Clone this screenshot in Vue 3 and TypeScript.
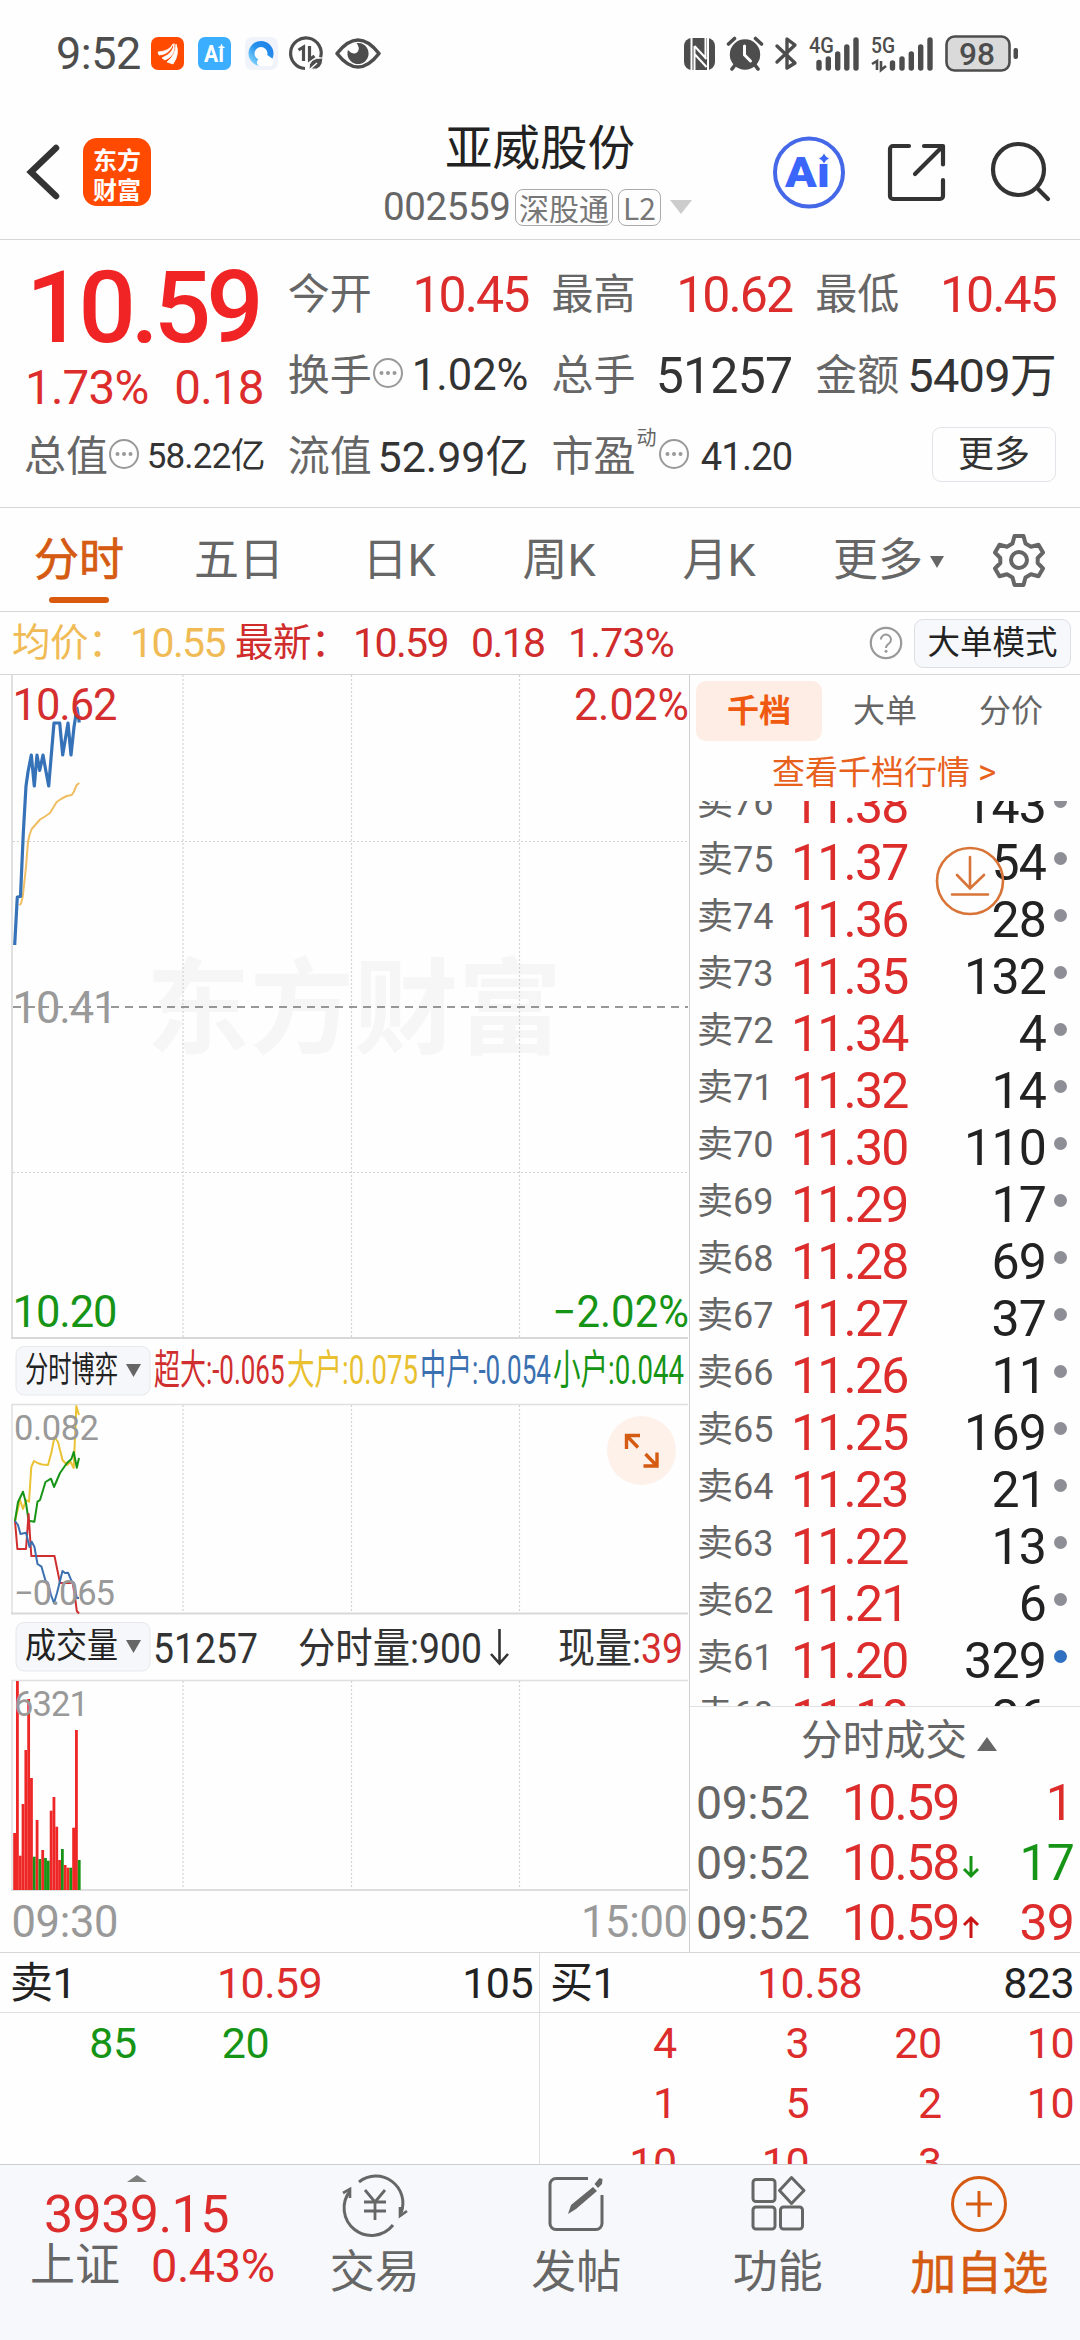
<script setup lang="ts">
interface Quote { label: string; value: string; tone?: string; size?: number; info?: boolean; sup?: string }
interface Level { n: number; price: string; qty: string; blue?: boolean }

const quotes: Quote[] = [
  { label: '今开', value: '10.45', tone: 'red price', size: 50 },
  { label: '最高', value: '10.62', tone: 'red price', size: 50 },
  { label: '最低', value: '10.45', tone: 'red price', size: 50 },
  { label: '换手', value: '1.02%', tone: 'loose', size: 43.5, info: true },
  { label: '总手', value: '51257', size: 50 },
  { label: '金额', value: '5409万', size: 47 },
  { label: '总值', value: '58.22亿', size: 35, info: true },
  { label: '流值', value: '52.99亿', tone: 'loose', size: 43 },
  { label: '市盈', value: '41.20', size: 38, info: true, sup: '动' },
]

const tabs: string[] = ['分时', '五日', '日K', '周K', '月K']

const levels: Level[] = [
  { n: 76, price: '11.38', qty: '143' },
  { n: 75, price: '11.37', qty: '54' },
  { n: 74, price: '11.36', qty: '28' },
  { n: 73, price: '11.35', qty: '132' },
  { n: 72, price: '11.34', qty: '4' },
  { n: 71, price: '11.32', qty: '14' },
  { n: 70, price: '11.30', qty: '110' },
  { n: 69, price: '11.29', qty: '17' },
  { n: 68, price: '11.28', qty: '69' },
  { n: 67, price: '11.27', qty: '37' },
  { n: 66, price: '11.26', qty: '11' },
  { n: 65, price: '11.25', qty: '169' },
  { n: 64, price: '11.23', qty: '21' },
  { n: 63, price: '11.22', qty: '13' },
  { n: 62, price: '11.21', qty: '6' },
  { n: 61, price: '11.20', qty: '329', blue: true },
  { n: 60, price: '11.18', qty: '26' },
]

const trades = [
  { time: '09:52', price: '10.59', dir: '', qty: '1', tone: 'red' },
  { time: '09:52', price: '10.58', dir: 'down', qty: '17', tone: 'green' },
  { time: '09:52', price: '10.59', dir: 'up', qty: '39', tone: 'red' },
]

const sellQueue: string[] = ['85', '20']
const buyQueue: string[] = ['4', '3', '20', '10', '1', '5', '2', '10', '10', '10', '3']

const gridX: number[] = [183, 351.5, 519.5]

/* top edge of each one-minute volume bar, and whether it is a rising one */
const bars: [number, boolean][] = [
  [1833, true], [1681, true], [1855.7, true], [1804, true], [1750, true], [1699, true], [1778, true],
  [1856.7, false], [1820, true], [1859, false], [1850, true], [1858, false], [1860.7, false],
  [1810.7, true], [1797, true], [1826.7, true], [1860, true], [1849, false], [1865, true],
  [1867.7, true], [1867.7, false], [1827.7, true], [1730, true], [1860, false],
]

const pricePath = '14.7,945 17.3,897 20.5,896.5 23.3,833 26,786 28,772 31.3,755 34.3,786 37,755 39.7,770.5 43,755 45.7,770 48.7,786 51.3,755 54,723 59.7,723 62.7,755 68,723 71,755 74,727 77,708 79.3,722.5'
const avgPath = '19.3,905 20.8,904 22.7,897 26,867 28,842 29.5,835 31.7,829 40,819.5 45,816.5 50,813 53,808 56.7,802 61,799 66.7,796 71.7,795 73.7,792 76.7,785 79.3,783'
const bigPath = '15,1521 20,1500 23,1509 26,1500 29,1501.7 31.3,1467 34,1461 37.5,1463 42,1464.5 48,1465 51.3,1453 54.5,1437 58,1442 62.5,1460 67,1465 70.5,1461.7 73.7,1468 76.3,1406 79,1415'
const smallPath = '15,1521 18,1502 23,1491.7 26,1503 28.6,1520.7 34.4,1521.7 37.5,1501.7 40,1500 45.5,1482 51,1478.7 54,1487 60,1473 67,1463 71.4,1459 73.7,1452 76.8,1467.7 79,1458'
const superPath = '15,1521 17.4,1549 26,1549 28.6,1514 31.3,1556 54.5,1556 60,1583 72.8,1583 75,1597 76.8,1611 79,1613.5'
const midPath = '15,1521 18,1525 20.5,1534 26,1532.7 29.5,1547 31.7,1541.7 34.4,1546.7 37.5,1564 41.5,1566.7 45.5,1580.7 48,1583 51,1595 54,1603 57,1593 62.5,1571 65,1573 68,1572.7 71.4,1580.7 74,1583 76.8,1598 79,1598'
</script>

<template>
  <div class="page">
    <header class="status">
      <span class="clock">9:52</span>
      <svg class="status-left" viewBox="150 30 240 46" width="240" height="46">
        <defs>
          <linearGradient id="ring" x1="0" y1="1" x2="1" y2="0">
            <stop offset="0" stop-color="#7fd4fb" /><stop offset="0.5" stop-color="#2a94ec" /><stop offset="1" stop-color="#1e80e8" />
          </linearGradient>
        </defs>
        <rect x="151" y="37" width="33" height="33" rx="7" fill="#ff4a00" />
        <path d="M158 52q12-1 15-8q-4 11-14 11zM162 58q12-5 12-14.500q2 12-9 16.500zM167 62q9-7 9-18q4 10-3 20z" fill="#fff" stroke="#fff" stroke-width=".8" stroke-linejoin="round" />
        <rect x="198" y="37" width="33" height="33" rx="7" fill="#3baeff" />
        <text x="204" y="61.500" class="tiny-ai" textLength="20" lengthAdjust="spacingAndGlyphs">Aı</text>
        <path d="M221.500 43.500l1.100 2.700 2.700 1.100-2.700 1.100-1.100 2.700-1.100-2.700-2.700-1.100 2.700-1.100z" fill="#fff" />
        <rect x="245" y="37" width="33" height="33" rx="7" fill="#f0f4fa" />
        <circle cx="261" cy="53.500" r="9.500" fill="#fff" stroke="url(#ring)" stroke-width="6" />
        <path d="M259 66a4 4 0 0 1 1-7.500a6 6 0 0 1 10-1.500a5 5 0 0 1 1 9z" fill="#fff" />
        <g fill="none" stroke="#4d4d4d" stroke-width="3.200">
          <path d="M305 68.500a15.300 15.300 0 1 1 15.600-11" />
          <path d="M298.500 50l5-3v14M309.500 46v13.500l5-3.500" stroke-width="3.200" />
        </g>
        <path d="M309 70q-1-13 14-12q-1 13-11 11z" fill="#4d4d4d" stroke="#fff" stroke-width="1" />
        <path d="M308 71l9-8" stroke="#fff" stroke-width="1.500" />
        <path d="M337 53.500Q358 26.500 379 53.500Q358 80.500 337 53.500z" fill="none" stroke="#4d4d4d" stroke-width="3.600" stroke-linejoin="round" />
        <path d="M348 50a10.600 10.600 0 1 0 8.500-7q4 5 1 9q-4 4-9.500-2z" fill="#4d4d4d" />
      </svg>
      <svg class="status-right" viewBox="680 30 345 46" width="345" height="46">
        <rect x="684" y="38" width="31" height="32" rx="8" fill="#4d4d4d" />
        <path d="M691.500 36v34M708 38v34" stroke="#fff" stroke-width="2" />
        <path d="M694.500 46v24M694.500 46l12 13M694.500 54l12 13M705.500 38v21" stroke="#fff" stroke-width="2" fill="none" />
        <circle cx="745" cy="54.500" r="15.200" fill="#4d4d4d" />
        <path d="M728.500 44l6-5.500M761.500 44l-6-5.500M735 65l-3 4M755 65l3 4" stroke="#4d4d4d" stroke-width="3.600" stroke-linecap="round" />
        <path d="M744.500 46v9l6 6" fill="none" stroke="#fff" stroke-width="3" stroke-linecap="round" />
        <path d="M777 46l18 17-8 5V39l8 6-18 17" fill="none" stroke="#4d4d4d" stroke-width="3.400" stroke-linejoin="round" stroke-linecap="round" />
        <text x="809" y="53" class="net" textLength="25" lengthAdjust="spacingAndGlyphs">4G</text>
        <text x="871" y="53" class="net" textLength="24" lengthAdjust="spacingAndGlyphs">5G</text>
        <path d="M819 62.500V68M828.300 59v9M837.700 54v14M846.800 47v21M856 40v28M892.500 63v5M902 59v9M911.300 54v14M920.700 47v21M930 40v28" stroke="#4d4d4d" stroke-width="5.400" stroke-linecap="round" />
        <path d="M872 64l5-3v9M881 61v9l5-4" fill="none" stroke="#4d4d4d" stroke-width="2.600" />
        <rect x="946.500" y="36.500" width="63" height="34" rx="8" fill="#dadada" stroke="#4d4d4d" stroke-width="2.600" />
        <rect x="1013.500" y="48" width="4.500" height="11" rx="2" fill="#4d4d4d" />
        <text x="959" y="65" class="bat" textLength="36" lengthAdjust="spacingAndGlyphs">98</text>
      </svg>
    </header>

    <nav class="head">
      <svg class="back" viewBox="0 0 36 60" width="36" height="60"><path d="M31 6L6 30l25 24" fill="none" stroke="#333" stroke-width="6.500" stroke-linecap="round" stroke-linejoin="miter" /></svg>
      <div class="logo"><span>东方</span><span>财富</span></div>
      <div class="title">
        <div class="name">亚威股份</div>
        <div class="code"><span class="num">002559</span><i>深股通</i><i>L2</i><b class="tri"></b></div>
      </div>
      <svg class="tools" viewBox="770 130 284 84" width="284" height="84">
        <circle cx="809" cy="172.500" r="34" fill="#fff" stroke="#4468e8" stroke-width="4" />
        <text x="785" y="187" class="ai" textLength="45" lengthAdjust="spacingAndGlyphs">Aı</text>
        <path d="M824 153q1.500 4 5.500 5.500q-4 1.500-5.500 5.500q-1.500-4-5.500-5.500q4-1.500 5.500-5.500z" fill="#3a66fb" stroke="#fff" stroke-width=".5" />
        <path d="M909 146h-16a3 3 0 0 0-3 3v47a3 3 0 0 0 3 3h47a3 3 0 0 0 3-3v-16M924 146h19v18.500M942 147l-27 27" fill="none" stroke="#333" stroke-width="4.200" stroke-linecap="round" stroke-linejoin="round" />
        <circle cx="1018.500" cy="169.500" r="25.500" fill="none" stroke="#333" stroke-width="4.200" />
        <path d="M1037 188l11 11" stroke="#333" stroke-width="4.200" stroke-linecap="round" />
      </svg>
    </nav>

    <section class="quote">
      <div class="last">
        <div class="big">10.59</div>
        <div class="chg"><span>1.73%</span><span>0.18</span></div>
      </div>
      <div v-for="q in quotes" :key="q.label" class="cell">
        <span class="lab">{{ q.label }}<sup v-if="q.sup">{{ q.sup }}</sup></span>
        <svg v-if="q.info" :class="['info', { wide: q.sup }]" viewBox="0 0 32 32" width="32" height="32">
          <circle cx="16" cy="16" r="14" fill="none" stroke="#999" stroke-width="2" />
          <g fill="#999"><circle cx="9.500" cy="16" r="2" /><circle cx="16" cy="16" r="2" /><circle cx="22.500" cy="16" r="2" /></g>
        </svg>
        <span :class="['val', q.tone]" :style="{ fontSize: q.size + 'px' }">{{ q.value }}</span>
      </div>
      <div class="cell more"><button>更多</button></div>
    </section>

    <nav class="tabs">
      <span v-for="(t, i) in tabs" :key="t" :class="['tab', { on: i === 0 }]">{{ t }}</span>
      <span class="tab-more">更多<b class="tri"></b></span>
      <svg class="gear" viewBox="-30 -30 60 60" width="60" height="60">
        <path d="M-4.500-24h9l2 7.500l5.500 3.200l7.500-2l4.500 7.800l-5.300 5.500v5l5.300 5.500l-4.500 7.800l-7.500-2l-5.500 3.200l-2 7.500h-9l-2-7.500l-5.500-3.200l-7.500 2l-4.500-7.800l5.300-5.500v-5l-5.300-5.500l4.500-7.800l7.500 2l5.500-3.200z" fill="none" stroke="#666" stroke-width="4" stroke-linejoin="round" />
        <circle r="8" fill="none" stroke="#666" stroke-width="4" />
      </svg>
    </nav>

    <section class="line">
      <span class="avg-l">均价：</span><span class="avg-v">10.55</span>
      <span class="new-l">最新：</span><span class="new-v">10.59</span><span class="new-d">0.18</span><span class="new-p">1.73%</span>
      <svg class="help" viewBox="0 0 34 34" width="34" height="34">
        <circle cx="17" cy="17" r="15.200" fill="none" stroke="#999" stroke-width="2.200" />
        <path d="M12 13.500a5 5 0 1 1 8 4q-3 2-3 4.500" fill="none" stroke="#999" stroke-width="2" /><circle cx="17" cy="25.300" r="1.500" fill="#999" />
      </svg>
      <button class="mode">大单模式</button>
    </section>

    <main class="body">
      <div class="charts">
        <svg viewBox="0 675 689 665" width="689" height="665">
          <text x="146" y="1046" class="mark" textLength="416" lengthAdjust="spacingAndGlyphs">东方财富</text>
          <g class="dot"><path v-for="x in gridX" :key="x" :d="`M${x} 675V1338`" /><path d="M13 841.500H688M13 1172.500H688" /></g>
          <path d="M12 675V1338" stroke="#e0e0e0" stroke-width="2" />
          <path d="M11 1338H688" stroke="#d8d8d8" stroke-width="2" />
          <path d="M13 1007H688" stroke="#777" stroke-width="1.500" stroke-dasharray="8 6" />
          <polyline :points="avgPath" class="ln" stroke="#efbe62" />
          <polyline :points="pricePath" class="ln thick" stroke="#3572b8" />
          <g class="ax">
            <text x="12.500" y="720" textLength="105" class="f-red">10.62</text>
            <text x="574" y="720" textLength="115" lengthAdjust="spacingAndGlyphs" class="f-red">2.02%</text>
            <text x="12.500" y="1023" textLength="105" class="f-gray">10.41</text>
            <text x="12.500" y="1327" textLength="105" class="f-green">10.20</text>
            <text x="552.500" y="1327" textLength="136.500" lengthAdjust="spacingAndGlyphs" class="f-green">−2.02%</text>
          </g>
        </svg>

        <svg viewBox="0 1340 689 64" width="689" height="64">
          <rect x="16" y="1346.500" width="134" height="48.500" rx="8" class="sel" />
          <text x="25" y="1382" class="sel-t" textLength="93" lengthAdjust="spacingAndGlyphs">分时博弈</text>
          <path d="M126 1364h15l-7.500 13z" fill="#666" />
          <g class="ind">
            <text x="154" y="1384" fill="#d02f2f" textLength="130.500" lengthAdjust="spacingAndGlyphs">超大:-0.065</text>
            <text x="287" y="1384" fill="#e8c030" textLength="131" lengthAdjust="spacingAndGlyphs">大户:0.075</text>
            <text x="420" y="1384" fill="#3b70b0" textLength="131" lengthAdjust="spacingAndGlyphs">中户:-0.054</text>
            <text x="553" y="1384" fill="#169416" textLength="131" lengthAdjust="spacingAndGlyphs">小户:0.044</text>
          </g>
        </svg>

        <svg viewBox="0 1404 689 211" width="689" height="211">
          <g class="dot"><path v-for="x in gridX" :key="x" :d="`M${x} 1405V1613`" /></g>
          <path d="M12 1613V1404.500H688" fill="none" stroke="#e0e0e0" stroke-width="1.500" />
          <path d="M11 1613.500H688" stroke="#d8d8d8" stroke-width="2" />
          <polyline :points="bigPath" class="ln" stroke="#e9c235" />
          <polyline :points="smallPath" class="ln" stroke="#169416" />
          <polyline :points="superPath" class="ln" stroke="#d02f2f" />
          <polyline :points="midPath" class="ln" stroke="#3b70b0" />
          <text x="14" y="1440" class="sm" textLength="85">0.082</text>
          <text x="14" y="1605" class="sm" textLength="101">−0.065</text>
          <circle cx="641.500" cy="1450.500" r="34.500" fill="#fdf1ea" />
          <path d="M640 1435.500h-13.500v13.500M627 1436l11 11.500M643.500 1466h13.500v-13.500M656.500 1465.500l-11-11.500" fill="none" stroke="#d55a12" stroke-width="3.400" />
        </svg>

        <svg viewBox="0 1615 689 65" width="689" height="65">
          <rect x="16" y="1622.500" width="134" height="48.500" rx="8" class="sel" />
          <text x="25" y="1658" class="sel-t" textLength="93" lengthAdjust="spacingAndGlyphs">成交量</text>
          <path d="M126 1640h15l-7.500 13z" fill="#666" />
          <g class="vol">
            <text x="153" y="1663" textLength="105" lengthAdjust="spacingAndGlyphs">51257</text>
            <text x="298" y="1663" textLength="184" lengthAdjust="spacingAndGlyphs">分时量:900</text>
            <path d="M499.500 1629v34M491 1654l8.500 9.500 8.500-9.500" fill="none" stroke="#333" stroke-width="2.600" />
            <text x="558" y="1663" textLength="83" lengthAdjust="spacingAndGlyphs">现量:</text>
            <text x="641" y="1663" textLength="42" lengthAdjust="spacingAndGlyphs" class="f-red">39</text>
          </g>
        </svg>

        <svg viewBox="0 1680 689 272" width="689" height="272">
          <g class="dot"><path v-for="x in gridX" :key="x" :d="`M${x} 1681V1889`" /></g>
          <path d="M12 1890V1680.500H688" fill="none" stroke="#e0e0e0" stroke-width="1.500" />
          <path d="M11 1890H688" stroke="#dedede" stroke-width="2" />
          <rect v-for="(b, i) in bars" :key="i" :x="13.2 + i * 2.81" :y="b[0]" width="2.8" :height="1890 - b[0]" :fill="b[1] ? '#ee2626' : '#169416'" />
          <text x="14" y="1716" class="sm" textLength="75">6321</text>
          <g class="ax">
            <text x="11.500" y="1937" textLength="107" class="f-gray">09:30</text>
            <text x="581" y="1937" textLength="107" class="f-gray">15:00</text>
          </g>
        </svg>
      </div>

      <aside class="side">
        <div class="side-tabs"><span class="on">千档</span><span>大单</span><span>分价</span></div>
        <div class="link">查看千档行情<em>&gt;</em></div>
        <div class="levels">
          <div class="levels-in">
            <div v-for="l in levels" :key="l.n" class="lv">
              <span class="lv-n">卖{{ l.n }}</span><span class="lv-p">{{ l.price }}</span><span class="lv-q">{{ l.qty }}</span><i :class="{ blue: l.blue }"></i>
            </div>
          </div>
          <svg class="jump" viewBox="-36 -36 72 72" width="72" height="72">
            <g fill="none" stroke="#d87437" stroke-width="2.600"><circle r="33" /><path d="M0-24V7M-13-6L0 7.500 14-6M-18 13.500H18" stroke-linecap="round" /></g>
          </svg>
        </div>
        <div class="deal-h">分时成交<b class="tri up"></b></div>
        <div v-for="(t, i) in trades" :key="i" class="deal">
          <span class="d-t">{{ t.time }}</span><span class="d-p">{{ t.price }}</span>
          <svg class="d-a" viewBox="0 0 18 26" width="18" height="26">
            <path v-if="t.dir === 'down'" d="M9 2v20M2 15l7 7 7-7" fill="none" stroke="#169416" stroke-width="3" />
            <path v-if="t.dir === 'up'" d="M9 24V4M2 11l7-7 7 7" fill="none" stroke="#c81414" stroke-width="3" />
          </svg>
          <span :class="['d-q', t.tone, { one: t.qty.length === 1 }]">{{ t.qty }}</span>
        </div>
      </aside>
    </main>

    <section class="queue">
      <div class="q-side">
        <div class="q-head"><span>卖1</span><span class="q-price red">10.59</span><span class="q-vol">105</span></div>
        <div class="q-grid green"><span v-for="(v, i) in sellQueue" :key="i">{{ v }}</span></div>
      </div>
      <div class="q-side buy">
        <div class="q-head"><span>买1</span><span class="q-price red">10.58</span><span class="q-vol">823</span></div>
        <div class="q-grid red"><span v-for="(v, i) in buyQueue" :key="i">{{ v }}</span></div>
      </div>
    </section>

    <footer class="foot">
      <div class="index">
        <b class="tri up"></b>
        <div class="idx-v">3939.15</div>
        <div class="idx-r"><span>上证</span><span class="red idx-p">0.43%</span></div>
      </div>
      <div class="act">
        <svg viewBox="-34 -30 68 60" width="68" height="60">
          <g fill="none" stroke="#666" stroke-width="3">
            <path d="M-16-22A27 27 0 0 1 26 9M18 21A27 27 0 0 1-25-13" /><path d="M-32-11l7-4v9M25 3v9l7-5" stroke-width="2.600" />
            <path d="M-10-14L0-2 10-14M0-2v18M-11-2h22M-11 7h22" stroke-width="2.800" />
          </g>
        </svg>
        <span>交易</span>
      </div>
      <div class="act">
        <svg viewBox="-34 -30 68 60" width="68" height="60">
          <path d="M12-25.500h-32a6 6 0 0 0-6 6v39a6 6 0 0 0 6 6H20a6 6 0 0 0 6-6V-9" fill="none" stroke="#666" stroke-width="3" />
          <path d="M-8 10l3-9 22-18 4 4-21 18zM18.500-20l5-6 3 1-.5 5-4 4z" fill="#666" />
        </svg>
        <span>发帖</span>
      </div>
      <div class="act">
        <svg viewBox="-34 -30 68 60" width="68" height="60">
          <g fill="none" stroke="#666" stroke-width="3"><rect x="-25" y="-24.500" width="22" height="22" rx="3" /><rect x="-25" y="3" width="22" height="22" rx="3" /><rect x="2.500" y="3" width="22" height="22" rx="3" /><path d="M13.500-26.500L26-13.500 13.500-.5 1.500-13.500z" stroke-linejoin="round" /></g>
        </svg>
        <span>功能</span>
      </div>
      <div class="act add">
        <svg viewBox="-34 -30 68 60" width="68" height="60"><circle r="26.500" fill="none" stroke="#d55a12" stroke-width="3" /><path d="M0-13V13M-13 0H13" stroke="#d55a12" stroke-width="3" /></svg>
        <span>加自选</span>
      </div>
    </footer>
  </div>
</template>

<style>
body { margin: 0; background: #fefefe; }
</style>

<style scoped>
.page {
  width: 1080px; height: 2340px; overflow: hidden; background: #fefefe; color: #333;
  font-family: Roboto, "Noto Sans CJK SC", sans-serif;
  display: flex; flex-direction: column; white-space: nowrap;
}
.page svg { display: block; flex: none; overflow: visible; }
.page text { font-family: Roboto, "Noto Sans CJK SC", sans-serif; }
.red { color: #dc2c2c; }
.green { color: #169416; }
.tri { display: inline-block; width: 0; height: 0; border: solid transparent; border-width: 14px 11px 0; border-top-color: #ccc; }
.tri.up { border-width: 0 10.5px 14px; border-top-color: transparent; border-bottom-color: #666; }

.status { height: 107px; display: flex; align-items: flex-start; }
.clock { width: 94px; padding-left: 56px; font-size: 45px; line-height: 46px; padding-top: 31px; color: #4d4d4d; letter-spacing: -0.5px; }
.status-left { margin-top: 30px; }
.status-right { margin: 30px 0 0 290px; }
.tiny-ai { font-size: 24px; font-weight: 700; fill: #fff; }
.net { font-size: 22px; font-weight: 500; fill: #4d4d4d; }
.bat { font-size: 31px; font-weight: 500; fill: #4d4d4d; }

.head { height: 132px; border-bottom: 1px solid #d6d6d6; display: flex; align-items: flex-start; flex: none; }
.back { margin: 35px 0 0 25px; }
.logo { margin: 31px 0 0 22px; width: 68px; height: 60px; padding-top: 8px; border-radius: 14px; background: #ff4a00; color: #fff; font-weight: 700; font-size: 24px; line-height: 30px; display: flex; flex-direction: column; align-items: center; }
.title { width: 386px; margin-left: 196px; }
.name { font-size: 47.5px; line-height: 60px; margin: 12px 0 0 98px; color: #222; }
.code { display: flex; align-items: center; height: 38px; margin: 9px 0 0 36px; color: #666; }
.code .num { font-size: 38.5px; line-height: 38px; width: 132px; letter-spacing: -0.4px; }
.code i { font-style: normal; font-size: 30px; line-height: 34px; height: 35px; border: 1.5px solid #aaa; border-radius: 8px; padding: 0 3px; margin-right: 5px; color: #777; font-family: "Noto Sans CJK SC", sans-serif; }
.code i + i { padding: 0 4px; }
.code .tri { margin-left: 4px; }
.tools { margin: 23px 0 0 37px; }
.ai { font-size: 42px; font-weight: 900; fill: #3a66fb; }

.quote { height: 253px; padding: 14px 24px 0; border-bottom: 1px solid #d6d6d6; display: grid; grid-template-columns: repeat(4, 240.75px); column-gap: 23px; grid-auto-rows: 81px; flex: none; }
.last { grid-row: span 2; color: #f02424; }
.big { font-size: 101px; font-weight: 500; line-height: 100px; letter-spacing: -5px; padding: 4px 0 0 2px; }
.chg { display: flex; justify-content: space-between; font-size: 47.5px; line-height: 50px; color: #dc2c2c; letter-spacing: -0.8px; padding: 5px 1px 0 1px; }
.cell { display: flex; align-items: center; }
.lab { font-size: 42px; line-height: 60px; color: #666; position: relative; }
.lab sup { position: absolute; left: 85px; top: -2px; font-size: 20px; line-height: 26px; }
.info { margin: -6px 0 0 0; }
.info.wide { margin-left: 22px; }
.val { margin-left: auto; line-height: 60px; letter-spacing: -0.8px; }
.val.price { letter-spacing: -1.9px; }
.val.loose { letter-spacing: 0; }
.more { justify-content: flex-end; }
.more button, .mode { font-family: inherit; border: 1.5px solid #e1e4e8; border-radius: 9px; background: #fefefe; color: #333; padding: 0; }
.more button { width: 124px; height: 55px; font-size: 36px; line-height: 50px; margin-top: -4px; }

.tabs { height: 103px; border-bottom: 1px solid #d6d6d6; display: flex; align-items: flex-start; font-size: 45px; line-height: 106px; color: #666; flex: none; }
.tab { width: 160px; text-align: center; position: relative; left: -1px; }
.tab.on { color: #d55a12; -webkit-text-stroke: 0.7px #d55a12; }
.tab.on::after { content: ""; position: absolute; left: 50px; top: 89px; width: 60px; height: 6px; border-radius: 3px; background: #d9590f; }
.tab-more { margin-left: 33px; width: 156px; }
.tab-more .tri { border-width: 12px 7.5px 0; border-top-color: #666; margin: 0 0 8px 7px; }
.gear { margin-top: 21.5px; }

.line { height: 62px; border-bottom: 1px solid #d6d6d6; display: flex; align-items: center; font-size: 41px; color: #d02c2c; letter-spacing: -1.6px; flex: none; }
.line > span { flex: none; line-height: 60px; }
.line .avg-l, .line .new-l { font-size: 38.5px; letter-spacing: -0.5px; }
.line .avg-l { margin-left: 12px; width: 118px; color: #f0bb55; }
.avg-v { width: 105px; color: #f0bb55; }
.new-l { width: 118px; }
.new-v { width: 118px; }
.new-d { width: 97px; }
.line .new-p { width: 301px; letter-spacing: -0.8px; }
.mode { margin-left: 11px; width: 157px; height: 49px; background: #f7f8fb; border-color: #dcdfe3; color: #222; font-size: 32.5px; line-height: 44px; }

.body { height: 1277px; border-bottom: 1px solid #d6d6d6; display: flex; flex: none; }
.charts { width: 689px; border-right: 1px solid #d0d0d0; flex: none; }
.dot path { stroke: #d2d2d2; stroke-width: 1.2; stroke-dasharray: 2 2; }
.ln { fill: none; stroke-width: 2; stroke-linejoin: round; }
.ln.thick { stroke-width: 3.2; }
.ax { font-size: 43.5px; }
.sm { font-size: 34.5px; fill: #999; }
.f-red { fill: #d42e2e; }
.f-green { fill: #169416; }
.f-gray { fill: #999; }
.mark { font-size: 104px; font-weight: 700; fill: #f6f6f6; }
.sel { fill: #f6f7fa; stroke: #e6e8ec; stroke-width: 1; }
.sel-t { font-size: 35px; fill: #222; }
.ind { font-size: 41px; }
.vol { font-size: 42px; fill: #333; }

.side { width: 390px; display: flex; flex-direction: column; }
.side > div { flex: none; }
.side-tabs { display: flex; padding: 6px 0 0 6px; height: 60px; font-size: 32px; line-height: 61px; text-align: center; color: #666; }
.side-tabs span { width: 126px; }
.side-tabs .on { background: #fdede5; border-radius: 10px; color: #f05a10; font-weight: 700; }
.link { height: 60px; padding-left: 82px; font-size: 33px; line-height: 63px; color: #e8611c; }
.link em { font-style: normal; font-size: 35px; margin-left: 8px; }
.levels { height: 905px; overflow: hidden; border-bottom: 1px solid #e2e2e2; position: relative; }
.levels-in { margin-top: -23px; }
.lv { height: 57px; display: flex; align-items: flex-start; }
.lv-n { width: 94px; padding-left: 7px; font-size: 36px; line-height: 50px; color: #666; }
.lv-p { width: 117px; font-size: 50px; line-height: 57px; color: #dc2c2c; letter-spacing: -1.8px; }
.lv-q { width: 138px; text-align: right; font-size: 50px; line-height: 57px; color: #222; letter-spacing: -0.8px; }
.lv i { width: 13px; height: 13px; border-radius: 50%; background: #8e8e96; margin: 17px 0 0 8px; }
.lv i.blue { background: #3070c0; }
.jump { position: absolute; left: 244px; top: 44px; }
.deal-h { height: 66px; padding-left: 111px; font-size: 41.5px; line-height: 67px; color: #666; }
.deal-h .tri { margin: 0 0 4px 10px; }
.deal { height: 60px; display: flex; align-items: center; line-height: 60px; }
.d-t { width: 146px; padding-left: 6px; font-size: 46.5px; color: #666; letter-spacing: -0.5px; }
.d-p { width: 120px; font-size: 50px; color: #dc2c2c; letter-spacing: -1.8px; }
.d-a { margin-top: 8px; }
.d-q { margin-left: auto; padding-right: 6px; font-size: 50px; letter-spacing: -0.8px; }
.d-q.one { padding-right: 7px; }

.queue { height: 211px; display: flex; overflow: hidden; border-bottom: 1px solid #cfcfcf; flex: none; }
.q-side { width: 539px; flex: none; font-size: 43px; letter-spacing: -0.6px; }
.q-side.buy { width: 540px; border-left: 1px solid #e0e0e0; }
.q-head { height: 59px; border-bottom: 1px solid #dedede; display: flex; line-height: 60px; color: #222; padding: 0 6px 0 10px; }
.q-head > span { width: 207px; }
.q-head .q-vol { width: auto; margin-left: auto; }
.q-grid { display: grid; grid-template-columns: repeat(4, 132.5px); grid-auto-rows: 60px; line-height: 61px; padding-left: 4px; text-align: right; }

.foot { flex: 1; background: #f7f8fb; display: flex; color: #666; }
.index { width: 274px; position: relative; }
.index .tri { position: absolute; left: 127px; top: 10px; border-width: 0 10.5px 7px; border-bottom-color: #808080; }
.idx-v { color: #dc2c2c; font-size: 52px; line-height: 52px; margin: 24px 0 0 44px; letter-spacing: -0.6px; }
.idx-r { display: flex; padding-left: 30px; font-size: 45px; line-height: 50px; }
.idx-p { font-size: 47px; letter-spacing: -0.5px; margin-left: 31px; }
.act { width: 202px; display: flex; flex-direction: column; align-items: center; font-size: 45px; }
.act svg { margin-top: 9px; }
.act span { line-height: 60px; margin-top: 9px; }
.act.add { color: #d55a12; -webkit-text-stroke: 0.5px #d55a12; }
.act.add span { font-size: 46px; }
</style>
